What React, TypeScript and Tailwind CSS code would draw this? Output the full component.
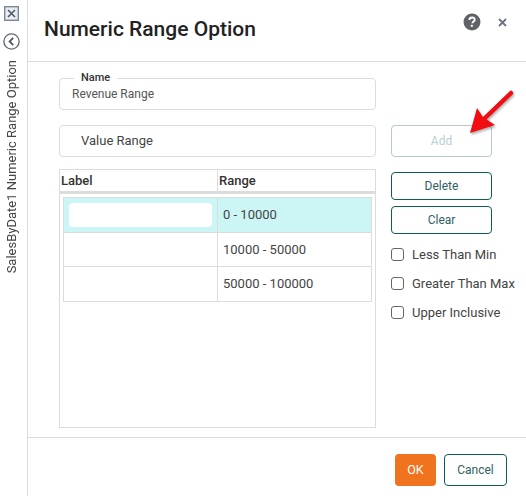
import React from 'react';

const rows = [
  { range: '0 - 10000', selected: true, height: 'h-[35px]' },
  { range: '10000 - 50000', selected: false, height: 'h-[34px]' },
  { range: '50000 - 100000', selected: false, height: 'h-[35px]' },
];

const checks = ['Less Than Min', 'Greater Than Max', 'Upper Inclusive'];

const App: React.FC = () => {
  return (
    <div className="flex w-[526px] h-[496px] overflow-hidden bg-white text-[#333] text-[13px] font-['Roboto',sans-serif]">
      {/* collapsed side rail */}
      <div className="w-[28px] h-full shrink-0 border-r border-[#dcdcdc] flex flex-col items-center pt-[6px]">
        <svg width="15" height="15" viewBox="0 0 15 15" className="ml-[-5px]">
          <rect x="0.7" y="0.7" width="13.6" height="13.6" fill="#e9edf1" stroke="#7b8794" strokeWidth="1.4" />
          <path d="M4 4l7 7M11 4l-7 7" stroke="#4b5563" strokeWidth="1.5" />
        </svg>
        <svg width="17" height="17" viewBox="0 0 17 17" className="mt-[12px] ml-[-5px]">
          <circle cx="8.5" cy="8.5" r="7.6" fill="none" stroke="#666b70" strokeWidth="1.4" />
          <path d="M10.2 4.9L6.6 8.5l3.6 3.6" fill="none" stroke="#4b5563" strokeWidth="1.8" />
        </svg>
        <div className="mt-[10px] ml-[-3px] [writing-mode:vertical-rl] rotate-180 whitespace-nowrap text-[13px] leading-[16px] text-[#444]">
          SalesByDate1 Numeric Range Option
        </div>
      </div>

      <div className="flex-1 flex flex-col min-w-0 relative">
        <div className="h-[62px] shrink-0 border-b border-[#dcdcdc] flex items-start justify-between pl-[16px] pr-[19px]">
          <h1 className="mt-[16px] text-[21px] leading-[27px] font-medium text-[#222]">Numeric Range Option</h1>
          <div className="flex items-center gap-[17px] mt-[13px]">
            <svg width="18" height="18" viewBox="0 0 18 18">
              <circle cx="9" cy="9" r="8.5" fill="#5f6368" />
              <path d="M6.4 7c0-1.6 1.1-2.5 2.7-2.5s2.6.9 2.6 2.2c0 1.9-2.3 1.9-2.3 3.6" fill="none" stroke="#fff" strokeWidth="1.9" />
              <rect x="7.8" y="11.8" width="2" height="2" fill="#fff" />
            </svg>
            <svg width="9" height="9" viewBox="0 0 9 9">
              <path d="M1 1l7 7M8 1l-7 7" stroke="#6b7280" strokeWidth="1.8" />
            </svg>
          </div>
        </div>

        <div className="flex-1 flex min-h-0 pl-[31px] pt-[16px]">
          <div className="w-[317px] shrink-0 flex flex-col">
            <div className="relative h-[32px] border border-[#dcdcdc] rounded-[4px] pl-[12px] pt-[7px] text-[12px] leading-[16px] text-[#555]">
              <span className="absolute left-[14px] top-[-8px] bg-white px-[7px] text-[11px] leading-[14px] font-medium text-[#333]">Name</span>
              Revenue Range
            </div>
            <div className="mt-[15px] h-[32px] border border-[#dcdcdc] rounded-[4px] pl-[21px] flex items-center text-[13px] text-[#444]">
              Value Range
            </div>

            <div className="mt-[12px] h-[259px] border border-[#dcdcdc]">
              <div className="flex h-[21px] border-b-[3px] border-[#dcdcdc] box-content text-[13px] font-medium text-[#333] leading-[21px]">
                <div className="w-[158px] pl-[1px] border-r border-[#dcdcdc]">Label</div>
                <div className="pl-[1px]">Range</div>
              </div>
              <div className="mx-[3px] mt-[3px] border border-[#dcdcdc] border-b-0">
                {rows.map((row) => (
                  <div key={row.range} className={`flex ${row.height} border-b border-[#dcdcdc] ${row.selected ? 'bg-[#ccf5f5]' : 'bg-white'}`}>
                    <div className="w-[154px] shrink-0 border-r border-[#dcdcdc] flex items-center pl-[5px]">
                      {row.selected && <div className="w-[143px] h-[24px] rounded-[4px] bg-white" />}
                    </div>
                    <div className="pl-[5px] flex items-center text-[13px] text-[#444]">{row.range}</div>
                  </div>
                ))}
              </div>
            </div>
          </div>

          <div className="ml-[15px] pt-[47px] flex flex-col">
            <button className="w-[101px] h-[32px] rounded-[4px] border border-[#b5cccc] text-[12px] text-[#b9d0d0]">Add</button>
            <button className="mt-[15px] w-[101px] h-[28px] rounded-[4px] border border-[#0f5c55] text-[12px] text-[#2f5f62]">Delete</button>
            <button className="mt-[6px] w-[101px] h-[28px] rounded-[4px] border border-[#0f5c55] text-[12px] text-[#2f5f62]">Clear</button>
            <div className="mt-[11px] flex flex-col gap-[10px]">
              {checks.map((label) => (
                <label key={label} className="flex items-center h-[19px] whitespace-nowrap text-[13px] text-[#444]">
                  <span className="w-[13px] h-[13px] rounded-[3px] border border-[#666] bg-white shrink-0" />
                  <span className="ml-[8px]">{label}</span>
                </label>
              ))}
            </div>
          </div>
        </div>

        <div className="h-[59px] shrink-0 border-t border-[#dcdcdc] flex justify-end items-start pt-[16px] pr-[19px] gap-[8px]">
          <button className="w-[41px] h-[32px] rounded-[4px] bg-[#f0731e] text-white text-[12.5px]">OK</button>
          <button className="w-[63px] h-[32px] rounded-[4px] border border-[#0f5c55] text-[12px] text-[#2f5f62]">Cancel</button>
        </div>

        {/* red annotation arrow sits over the Add button */}
        <svg width="50" height="50" viewBox="0 0 50 50" className="absolute left-[440px] top-[88px] drop-shadow-[1px_2px_1px_rgba(0,0,0,0.3)]">
          <path d="M43 5L17 30" stroke="#f20d12" strokeWidth="4.5" strokeLinecap="round" fill="none" />
          <path d="M2 45L9 20l6 9 12 8z" fill="#f20d12" />
        </svg>
      </div>
    </div>
  );
};

export default App;
